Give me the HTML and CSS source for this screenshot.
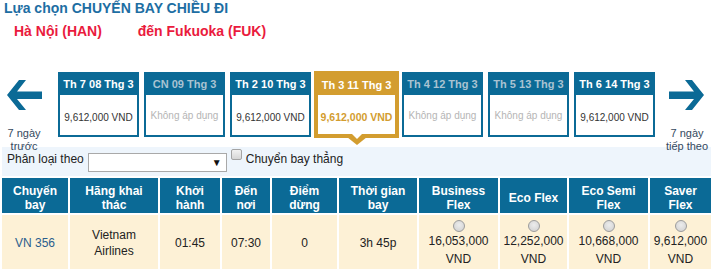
FILE: index.html
```html
<!DOCTYPE html>
<html lang="vi">
<head>
    <meta charset="UTF-8">
    <title>Lựa chọn chuyến bay</title>
    <link rel="stylesheet" href="styles.css">
</head>
<body>
    <h2 class="page-title">Lựa chọn CHUYẾN BAY CHIỀU ĐI</h2>
    <div class="route">
        <span class="route-from">Hà Nội (HAN)</span>
        <span class="route-to">đến Fukuoka (FUK)</span>
    </div>

    <div class="date-row">
        <a class="week-nav" href="#">
            <svg class="week-arrow" width="35" height="30" viewBox="0 0 35 30">
                <path d="M0 15 L12 0 H19 L10 11.5 H35 V19 H10 L19 30 H12 Z" fill="#0b6a96"/>
            </svg>
            <span>7 ngày<br>trước</span>
        </a>

        <div class="days">
            <div class="day">
                <div class="day-head">Th 7 08 Thg 3</div>
                <div class="day-body"><span class="fare">9,612,000 VND</span></div>
            </div>
            <div class="day off">
                <div class="day-head">CN 09 Thg 3</div>
                <div class="day-body">Không áp dụng</div>
            </div>
            <div class="day">
                <div class="day-head">Th 2 10 Thg 3</div>
                <div class="day-body"><span class="fare">9,612,000 VND</span></div>
            </div>
            <div class="day active">
                <div class="day-head">Th 3 11 Thg 3</div>
                <div class="day-body"><span class="fare">9,612,000 VND</span></div>
            </div>
            <div class="day off">
                <div class="day-head">Th 4 12 Thg 3</div>
                <div class="day-body">Không áp dụng</div>
            </div>
            <div class="day off">
                <div class="day-head">Th 5 13 Thg 3</div>
                <div class="day-body">Không áp dụng</div>
            </div>
            <div class="day">
                <div class="day-head">Th 6 14 Thg 3</div>
                <div class="day-body"><span class="fare">9,612,000 VND</span></div>
            </div>
        </div>

        <a class="week-nav next" href="#">
            <svg class="week-arrow" width="35" height="30" viewBox="0 0 35 30">
                <path d="M35 15 L23 0 H16 L25 11.5 H0 V19 H25 L16 30 H23 Z" fill="#0b6a96"/>
            </svg>
            <span>7 ngày<br>tiếp theo</span>
        </a>
    </div>

    <div class="filter-bar">
        <span class="filter-label">Phân loại theo</span>
        <div class="select-wrap">
            <select class="sort-select"></select>
            <span class="select-arrow">▼</span>
        </div>
        <label class="direct">
            <input type="checkbox" class="direct-check">
            Chuyển bay thẳng
        </label>
    </div>

    <div class="results">
        <table class="flights">
            <colgroup>
                <col style="width: 66px">
                <col style="width: 88px">
                <col style="width: 60px">
                <col style="width: 48px">
                <col style="width: 65px">
                <col style="width: 78px">
                <col style="width: 79px">
                <col style="width: 67px">
                <col style="width: 79px">
                <col style="width: 61px">
            </colgroup>
            <thead>
                <tr>
                    <th>Chuyến<br>bay</th>
                    <th>Hãng khai<br>thác</th>
                    <th>Khởi<br>hành</th>
                    <th>Đến<br>nơi</th>
                    <th>Điểm<br>dừng</th>
                    <th>Thời gian<br>bay</th>
                    <th>Business<br>Flex</th>
                    <th>Eco Flex</th>
                    <th>Eco Semi<br>Flex</th>
                    <th>Saver<br>Flex</th>
                </tr>
            </thead>
            <tbody>
                <tr>
                    <td class="flight-no">VN 356</td>
                    <td>Vietnam<br>Airlines</td>
                    <td>01:45</td>
                    <td>07:30</td>
                    <td>0</td>
                    <td>3h 45p</td>
                    <td class="price"><input type="radio" name="fare" class="fare-radio">16,053,000<br>VND</td>
                    <td class="price"><input type="radio" name="fare" class="fare-radio">12,252,000<br>VND</td>
                    <td class="price"><input type="radio" name="fare" class="fare-radio">10,668,000<br>VND</td>
                    <td class="price"><input type="radio" name="fare" class="fare-radio">9,612,000<br>VND</td>
                </tr>
            </tbody>
        </table>
    </div>
</body>
</html>
```

FILE: styles.css
```css
* {
    box-sizing: border-box;
    margin: 0;
    padding: 0;
}

body {
    font-family: "Liberation Sans", Arial, sans-serif;
    background: white;
    color: #222;
    overflow: hidden;
}

.page-title {
    font-size: 14px;
    line-height: 17px;
    font-weight: bold;
    color: #1d6ea3;
    padding-left: 4px;
}

.route {
    margin-top: 6px;
    font-size: 14px;
    line-height: 17px;
    font-weight: bold;
    color: #ea1b3d;
    padding-left: 14px;
}

.route-to {
    margin-left: 32px;
}

.date-row {
    display: flex;
    align-items: flex-start;
    height: 76px;
    margin-top: 31px;
}

.week-nav {
    width: 48px;
    margin-top: 9px;
    display: flex;
    flex-direction: column;
    align-items: center;
    text-decoration: none;
    color: #34495e;
    font-size: 11px;
    line-height: 13px;
    text-align: center;
}

.week-nav svg {
    display: block;
    margin-left: 1px;
    margin-bottom: 17px;
}

.week-nav.next {
    width: 44px;
    margin-left: 10px;
}

.week-nav.next svg {
    margin-left: -1px;
}

.days {
    display: flex;
    gap: 5px;
    margin-left: 10px;
}

.day {
    width: 81px;
    height: 65px;
    margin-top: 1px;
    border: 2px solid #0b6a96;
    display: flex;
    flex-direction: column;
    background: white;
    position: relative;
}

.day-head {
    background: #0b6a96;
    color: white;
    font-size: 11px;
    font-weight: bold;
    height: 21px;
    line-height: 21px;
    text-align: center;
    white-space: nowrap;
}

.day-body {
    flex: 1;
    display: flex;
    align-items: center;
    justify-content: center;
    font-size: 10px;
    color: #b5b5b5;
    white-space: nowrap;
}

.fare {
    color: #333;
    margin-top: 5px;
}

.day.off .day-head {
    color: #a9c3d2;
}

.day.active {
    width: 85px;
    height: 67px;
    margin: 0 -2px;
    border: 4px solid #d39d2f;
}

.day.active .day-head {
    background: #d39d2f;
    height: 20px;
    line-height: 20px;
}

.day.active .fare {
    color: #d39d2f;
    font-weight: bold;
    font-size: 10.5px;
    margin-top: 4px;
}

.day.active::after {
    content: "";
    position: absolute;
    left: 50%;
    bottom: -11px;
    transform: translateX(-50%);
    border-left: 10px solid transparent;
    border-right: 10px solid transparent;
    border-top: 8px solid #d39d2f;
}

.day.active::before {
    content: "";
    position: absolute;
    left: 50%;
    bottom: -5px;
    transform: translateX(-50%);
    border-left: 6px solid transparent;
    border-right: 6px solid transparent;
    border-top: 6px solid white;
    z-index: 1;
}

.filter-bar {
    display: flex;
    align-items: flex-start;
    height: 29px;
    margin-left: 2px;
    padding: 5px 0 0 5px;
    background: #eef5fc;
    font-size: 12px;
    line-height: 14px;
    color: #222;
}

.select-wrap {
    position: relative;
    margin: 1px 0 0 4px;
}

.sort-select {
    appearance: none;
    display: block;
    width: 139px;
    height: 19px;
    border: 1px solid #a9a9a9;
    background: white;
}

.select-arrow {
    position: absolute;
    right: 5px;
    top: 5px;
    font-size: 10px;
    line-height: 10px;
    color: #111;
}

.direct {
    display: flex;
    align-items: flex-start;
    gap: 4px;
    margin-left: 4px;
}

.direct-check {
    appearance: none;
    width: 11px;
    height: 11px;
    margin-top: -3px;
    border: 1px solid #a4a4a4;
    border-radius: 2px;
    background: linear-gradient(#f2f2f2, #d6d6d6);
}

.results {
    overflow: hidden;
}

.flights {
    table-layout: fixed;
    width: 713px;
    border-spacing: 2px;
    font-size: 12px;
}

.flights th {
    height: 35px;
    padding: 4px 2px 0;
    background: #0b6a96;
    color: white;
    font-weight: bold;
    line-height: 14px;
    text-align: center;
    vertical-align: middle;
}

.flights td {
    height: 56px;
    padding: 0 2px;
    background: #fdf1d6;
    color: #222;
    line-height: 16px;
    text-align: center;
    vertical-align: middle;
}

.flights td.flight-no {
    color: #2b5e8d;
}

.flights td.price {
    line-height: 18px;
    padding-top: 1px;
}

.fare-radio {
    appearance: none;
    display: block;
    width: 12px;
    height: 12px;
    margin: 0 auto;
    border: 1px solid #9c9c9c;
    border-radius: 50%;
    background: radial-gradient(circle at 50% 40%, #ececec, #cfcfcf);
}
```
